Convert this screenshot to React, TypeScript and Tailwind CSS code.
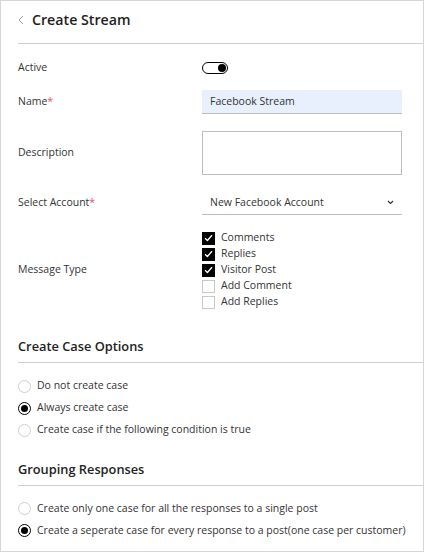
import { useState } from "react"

const font = { fontFamily: '"Open Sans", "Noto Sans", sans-serif' }

function Toggle({ on }: { on: boolean }) {
  return (
    <div className="flex h-[12px] w-[26px] items-center justify-end rounded-full border-[1.5px] border-black px-[1px]">
      {on && <div className="h-[8px] w-[8px] rounded-full bg-black" />}
    </div>
  )
}

function Checkbox({ checked, label }: { checked: boolean; label: string }) {
  return (
    <div className="flex h-[16px] items-center gap-[6px]">
      {checked ? (
        <div className="flex h-[13px] w-[13px] items-center justify-center bg-black">
          <svg width="9" height="8" viewBox="0 0 9 8" fill="none">
            <path d="M1 4.2 L3.4 6.5 L8 1.3" stroke="white" strokeWidth="1.3" />
          </svg>
        </div>
      ) : (
        <div className="h-[13px] w-[13px] border border-[#c8c8c8] bg-white" />
      )}
      <span>{label}</span>
    </div>
  )
}

function Radio({ checked, label }: { checked: boolean; label: string }) {
  return (
    <div className="flex h-[22px] items-center gap-[6px] whitespace-nowrap">
      {checked ? (
        <div className="flex h-[13px] w-[13px] items-center justify-center rounded-full border-[1.5px] border-black">
          <div className="h-[7px] w-[7px] rounded-full bg-black" />
        </div>
      ) : (
        <div className="h-[13px] w-[13px] rounded-full border border-[#cfcfcf]" />
      )}
      <span>{label}</span>
    </div>
  )
}

export default function App() {
  const [name] = useState("Facebook Stream")

  return (
    <div style={font} className="h-[552px] w-[424px] overflow-hidden border border-[#d6d6d6] bg-white text-[10.5px] text-[#333]">
      {/* Header */}
      <div className="flex h-[42px] items-center gap-[8px] px-[17px] pb-[4px]">
        <svg width="6" height="10" viewBox="0 0 6 10" fill="none">
          <path d="M5 1 L1 5 L5 9" stroke="#9a9a9a" strokeWidth="1" />
        </svg>
        <span className="text-[14.2px] font-semibold text-[#1e1e1e]">Create Stream</span>
      </div>
      <div className="ml-[17px] border-b border-[#cfcfcf]" />

      {/* Form */}
      <div className="pl-[17px] pr-[21px]">
        <div className="mt-[12px] flex h-[24px] items-center">
          <span className="w-[184px]">Active</span>
          <Toggle on />
        </div>

        <div className="mt-[10px] flex h-[24px] items-center">
          <span className="w-[184px]">
            Name<span className="text-[#e5506b]">*</span>
          </span>
          <div className="flex h-[24px] flex-1 items-center border-b border-[#bdbdbd] bg-[#e8f0fe] px-[8px]">
            {name}
          </div>
        </div>

        <div className="mt-[17px] flex h-[44px] items-center">
          <span className="w-[184px]">Description</span>
          <div className="h-[44px] flex-1 border border-[#bdbdbd]" />
        </div>

        <div className="mt-[16px] flex h-[24px] items-center">
          <span className="w-[184px]">
            Select Account<span className="text-[#e5506b]">*</span>
          </span>
          <div className="flex h-[24px] flex-1 items-center justify-between border-b border-[#bdbdbd] pl-[8px] pr-[8px]">
            <span>New Facebook Account</span>
            <svg width="7" height="5" viewBox="0 0 7 5" fill="none">
              <path d="M1 1 L3.5 3.5 L6 1" stroke="#333" strokeWidth="1.2" />
            </svg>
          </div>
        </div>

        <div className="mt-[15px] flex items-center">
          <span className="w-[184px]">Message Type</span>
          <div className="flex flex-col">
            <Checkbox checked label="Comments" />
            <Checkbox checked label="Replies" />
            <Checkbox checked label="Visitor Post" />
            <Checkbox checked={false} label="Add Comment" />
            <Checkbox checked={false} label="Add Replies" />
          </div>
        </div>
      </div>

      {/* Create Case Options */}
      <div className="mt-[27px] pl-[17px] text-[12.8px] font-semibold text-[#222]">Create Case Options</div>
      <div className="ml-[17px] mt-[6px] border-b border-[#cfcfcf]" />
      <div className="mt-[12px] flex flex-col pl-[17px]">
        <Radio checked={false} label="Do not create case" />
        <Radio checked label="Always create case" />
        <Radio checked={false} label="Create case if the following condition is true" />
      </div>

      {/* Grouping Responses */}
      <div className="mt-[19px] pl-[17px] text-[12.8px] font-semibold text-[#222]">Grouping Responses</div>
      <div className="ml-[17px] mt-[6px] border-b border-[#cfcfcf]" />
      <div className="mt-[11px] flex flex-col pl-[17px]">
        <Radio checked={false} label="Create only one case for all the responses to a single post" />
        <Radio checked label="Create a seperate case for every response to a post(one case per customer)" />
      </div>
    </div>
  )
}
